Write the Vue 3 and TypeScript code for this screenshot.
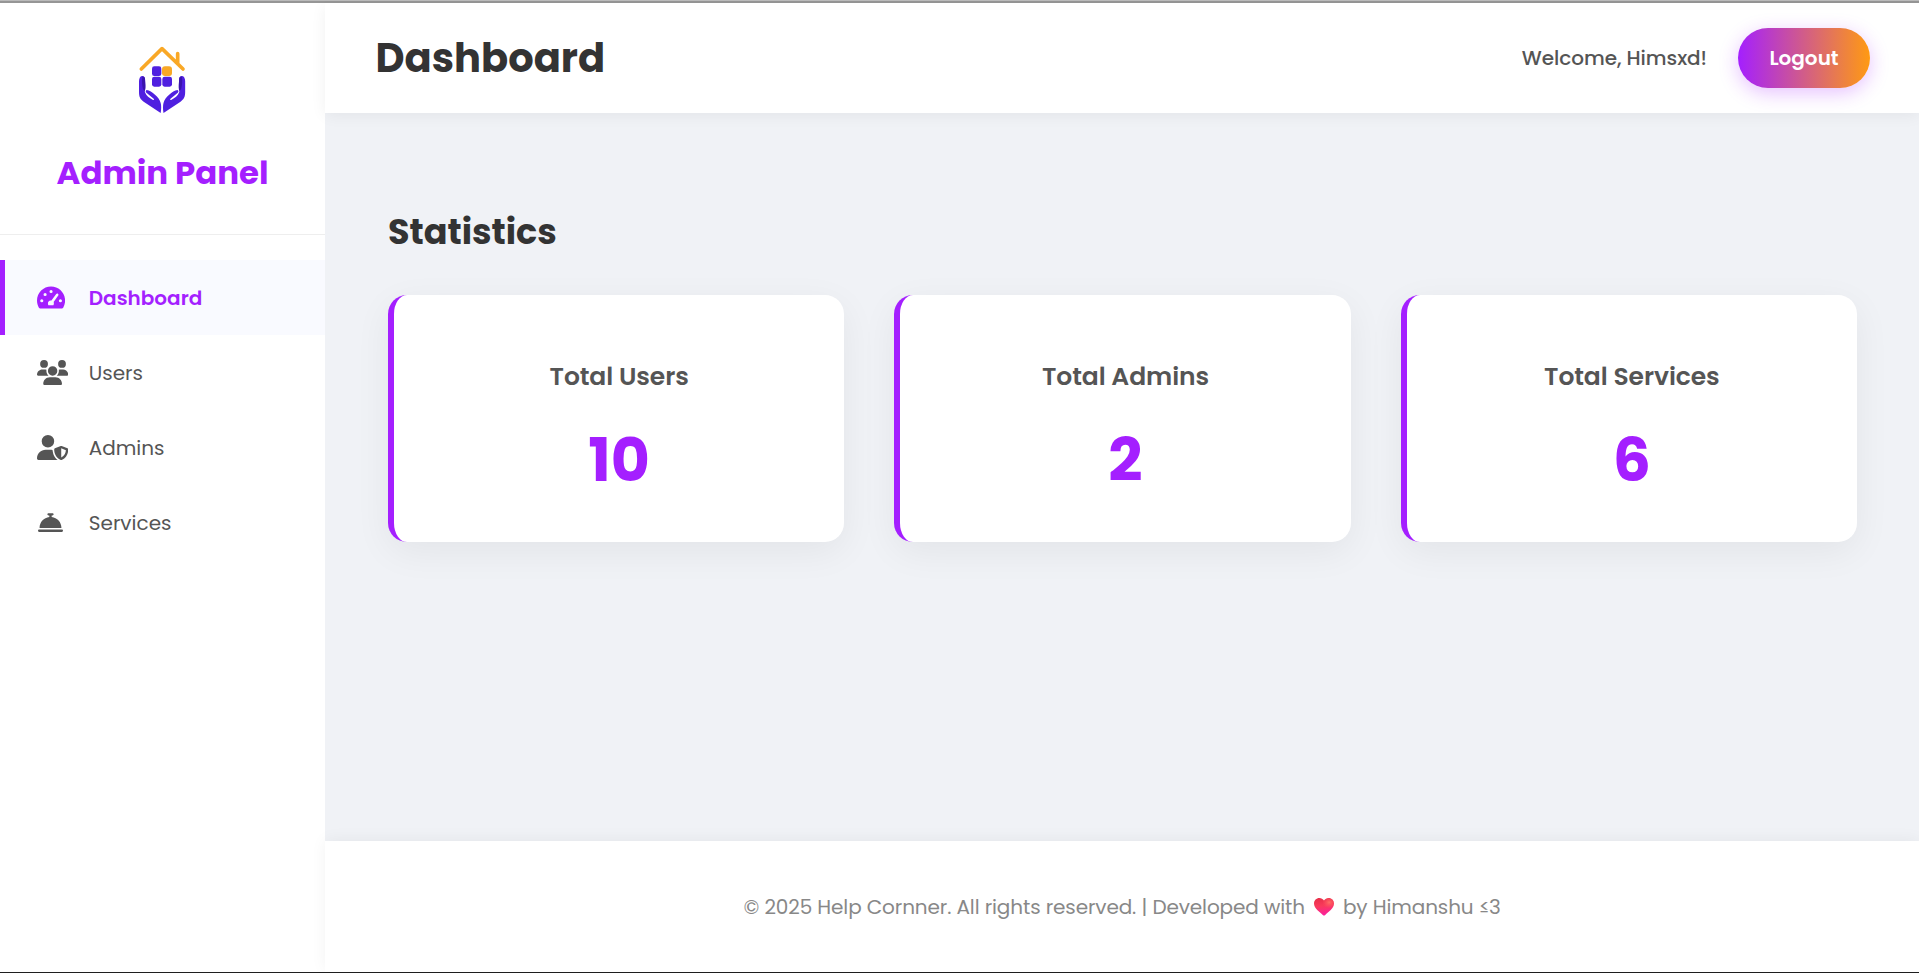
<script setup lang="ts">
interface NavItem {
  label: string
  viewBox: string
  width: number
  path: string
  active?: boolean
}

interface Stat {
  title: string
  value: number
}

const navItems: NavItem[] = [
  {
    label: 'Dashboard',
    viewBox: '0 0 576 512',
    width: 28.1,
    active: true,
    path: 'M288 32C128.94 32 0 160.94 0 320c0 52.8 14.25 102.26 39.06 144.8 5.61 9.62 16.3 15.2 27.44 15.2h443c11.14 0 21.83-5.58 27.44-15.2C561.75 422.26 576 372.8 576 320c0-159.06-128.94-288-288-288zM256 132a32 32 0 1 1 64 0a32 32 0 1 1-64 0zM134 194a32 32 0 1 1 64 0a32 32 0 1 1-64 0zM66 322a32 32 0 1 1 64 0a32 32 0 1 1-64 0zM448 322a32 32 0 1 1 64 0a32 32 0 1 1-64 0zM394 186C404 173 420 172 430 180C441 188 443 203 435 215L341 350C348 366 349 390 336 416H234C213 376 226 326 278 320C284 319 290 319 296 320Z'
  },
  {
    label: 'Users',
    viewBox: '0 0 640 512',
    width: 31.25,
    path: 'M144 0a80 80 0 1 1 0 160A80 80 0 1 1 144 0zM512 0a80 80 0 1 1 0 160A80 80 0 1 1 512 0zM0 298.7C0 239.8 47.8 192 106.7 192h42.7c15.9 0 31 3.5 44.6 9.7c-1.3 7.2-1.9 14.7-1.9 22.3c0 38.2 16.8 72.5 43.3 96c-.2 0-.4 0-.7 0H21.3C9.6 320 0 310.4 0 298.7zM405.3 320c-.2 0-.4 0-.7 0c26.6-23.5 43.3-57.8 43.3-96c0-7.6-.7-15-1.9-22.3c13.6-6.3 28.7-9.7 44.6-9.7h42.7C592.2 192 640 239.8 640 298.7c0 11.8-9.6 21.3-21.3 21.3H405.3zM224 224a96 96 0 1 1 192 0 96 96 0 1 1 -192 0zM128 485.3C128 411.7 187.7 352 261.3 352H378.7C452.3 352 512 411.7 512 485.3c0 14.7-11.9 26.7-26.7 26.7H154.7c-14.7 0-26.7-11.9-26.7-26.7z'
  },
  {
    label: 'Admins',
    viewBox: '0 0 640 512',
    width: 31.25,
    path: 'M224 256A128 128 0 1 0 224 0a128 128 0 1 0 0 256zm-45.7 48C79.8 304 0 383.8 0 482.3C0 498.7 13.3 512 29.7 512H418.3c1.8 0 3.5-.2 5.3-.5c-76.3-55.1-99.8-141-103.1-200.2c-16.1-4.8-33.1-7.3-50.7-7.3H178.3zm308.8-78.3l-120 48C358 277.4 352 286.2 352 296c0 63.3 25.9 168.8 134.8 214.2c5.9 2.5 12.6 2.5 18.5 0C614.1 464.8 640 359.3 640 296c0-9.8-6-18.6-15.1-22.3l-120-48c-5.7-2.3-12.1-2.3-17.8 0zM591.4 312c-3.9 50.7-27.2 116.7-95.4 149.7V273.8L591.4 312z'
  },
  {
    label: 'Services',
    viewBox: '0 0 512 512',
    width: 25,
    path: 'M216 64c-13.3 0-24 10.7-24 24s10.7 24 24 24h16v33.3C119.6 157.2 32 252.4 32 368H480c0-115.6-87.6-210.8-200-222.7V112h16c13.3 0 24-10.7 24-24s-10.7-24-24-24H256 216zM24 400c-13.3 0-24 10.7-24 24s10.7 24 24 24H488c13.3 0 24-10.7 24-24s-10.7-24-24-24H24z'
  }
]

const stats: Stat[] = [
  { title: 'Total Users', value: 10 },
  { title: 'Total Admins', value: 2 },
  { title: 'Total Services', value: 6 }
]
</script>

<template>
  <div class="page">
    <aside class="sidebar">
      <div class="brand">
        <svg class="logo" viewBox="0 0 270 285" aria-hidden="true">
          <path d="M64 117 L126 56 L189 117 M173 101 V71" fill="none" stroke="#f9a826" stroke-width="11" stroke-linecap="round" stroke-linejoin="round" />
          <g fill="#4f1fe0">
            <rect x="96" y="109" width="28" height="29" rx="7" />
            <rect x="96" y="140" width="28" height="30" rx="7" />
            <rect x="127" y="140" width="29" height="30" rx="7" />
            <g id="hand">
              <path d="M66 138 C60 139 57 146 57 154 L57 186 C57 201 61 208 71 215 L122 249 C124 239 124 225 122 219 C120 209 113 201 105 194 C97 187 88 180 80 180 C75 182 77 187 81 190 L101 206 C103 209 101 211 98 209 C88 204 79 198 75 187 L74 181 C76 177 76 171 76 165 L75 146 C74 140 70 137 66 138 Z" />
              <path d="M67 141 C65 152 66 166 69 177 L74 184 C77 177 76 171 76 165 L75 146 C74 141 70 138 67 141 Z" fill="#3a14ad" />
            </g>
            <use href="#hand" transform="translate(252.5 0) scale(-1 1)" />
          </g>
          <rect x="126" y="109" width="30" height="29" rx="9" fill="#f9a826" />
        </svg>
        <h2 class="brand-name">Admin Panel</h2>
      </div>
      <nav class="nav">
        <a v-for="item in navItems" :key="item.label" class="nav-item" :class="{ active: item.active }">
          <span class="nav-icon">
            <svg :viewBox="item.viewBox" :width="item.width" height="25" aria-hidden="true"><path :d="item.path" fill-rule="evenodd" /></svg>
          </span>
          <span>{{ item.label }}</span>
        </a>
      </nav>
    </aside>

    <div class="main">
      <header class="topbar">
        <h1 class="title">Dashboard</h1>
        <div class="account">
          <span class="welcome">Welcome, Himsxd!</span>
          <button class="logout" type="button">Logout</button>
        </div>
      </header>

      <main class="content">
        <h2 class="section-title">Statistics</h2>
        <div class="cards">
          <section v-for="stat in stats" :key="stat.title" class="card">
            <h3 class="card-title">{{ stat.title }}</h3>
            <p class="card-value">{{ stat.value }}</p>
          </section>
        </div>
      </main>

      <footer class="footer">
        <span>© 2025 Help Cornner. All rights reserved. | Developed with</span>
        <svg class="heart" viewBox="0 0 20 18" aria-hidden="true">
          <defs>
            <linearGradient id="heart-fill" x1="0.35" y1="0" x2="0.5" y2="1">
              <stop offset="0" stop-color="#e8304a" />
              <stop offset="0.45" stop-color="#fa3a5c" />
              <stop offset="1" stop-color="#fb1fa0" />
            </linearGradient>
            <radialGradient id="heart-shine" cx="0.76" cy="0.25" r="0.34">
              <stop offset="0" stop-color="#ff6f66" />
              <stop offset="1" stop-color="#ff5060" stop-opacity="0" />
            </radialGradient>
          </defs>
          <path d="M10 2.6 C8.8 .9 7.3 0 5.4 0 C2.3 0 0 2.4 0 5.6 C0 10.4 5.7 14.1 8.8 16.9 C9.6 17.6 10.4 17.6 11.2 16.9 C14.3 14.1 20 10.4 20 5.6 C20 2.4 17.7 0 14.6 0 C12.7 0 11.2 .9 10 2.6 Z" fill="url(#heart-fill)" />
          <path d="M10 2.6 C8.8 .9 7.3 0 5.4 0 C2.3 0 0 2.4 0 5.6 C0 10.4 5.7 14.1 8.8 16.9 C9.6 17.6 10.4 17.6 11.2 16.9 C14.3 14.1 20 10.4 20 5.6 C20 2.4 17.7 0 14.6 0 C12.7 0 11.2 .9 10 2.6 Z" fill="url(#heart-shine)" />
        </svg>
        <span>by Himanshu ≤3</span>
      </footer>
    </div>
  </div>
</template>

<style>
body {
  margin: 0;
  overflow: hidden;
}
</style>

<style scoped>
.page {
  position: relative;
  display: flex;
  box-sizing: border-box;
  height: 100vh;
  border-top: 3px solid #969696;
  border-bottom: 1px solid #1f1f1f;
  background: #f0f2f6;
  font-family: Poppins, 'Open Sans', sans-serif;
  color: #333;
}

.page::before {
  content: '';
  position: absolute;
  top: -3px;
  left: 0;
  right: 0;
  height: 1px;
  background: #bababa;
}

.sidebar {
  flex: none;
  width: 325px;
  background: #fff;
}

.brand {
  display: flex;
  flex-direction: column;
  align-items: center;
  box-sizing: border-box;
  height: 232px;
  padding-top: 27px;
  border-bottom: 1px solid #eee;
}

.logo {
  width: 90px;
  height: 95px;
  margin-left: 5px;
}

.brand-name {
  margin: 24px 0 0;
  font-size: 32.4px;
  line-height: 48px;
  font-weight: 700;
  color: #a41fff;
}

.nav {
  padding-top: 25px;
}

.nav-item {
  display: flex;
  align-items: center;
  gap: 24.25px;
  box-sizing: border-box;
  height: 75px;
  padding-left: 31.5px;
  border-left: 5px solid transparent;
  font-size: 20px;
  color: #555;
}

.nav-item.active {
  border-left-color: #a41fff;
  background: #f9faff;
  color: #a41fff;
  font-weight: 600;
}

.nav-icon {
  display: flex;
  width: 28px;
  height: 25px;
}

.nav-icon svg {
  flex: none;
  margin: 0 auto;
  fill: currentColor;
}

.main {
  flex: 1;
  display: flex;
  flex-direction: column;
  min-width: 0;
  background: #f0f2f6;
}

.topbar {
  display: flex;
  align-items: center;
  justify-content: space-between;
  height: 110px;
  box-sizing: border-box;
  padding: 0 49px 0 50.5px;
  background: #fff;
  box-shadow: 0 2.5px 15px rgba(0, 0, 0, 0.06);
}

.title {
  margin: 0;
  font-size: 40px;
  line-height: 60px;
  font-weight: 700;
}

.account {
  display: flex;
  align-items: center;
  gap: 31px;
}

.welcome {
  font-size: 20px;
  font-weight: 500;
  letter-spacing: -0.05px;
  color: #555;
}

.logout {
  width: 132px;
  height: 60px;
  padding: 0;
  border: 0;
  border-radius: 31px;
  background: linear-gradient(90deg, #a41fff, #ff9a12);
  box-shadow: 0 5px 19px rgba(164, 31, 255, 0.28);
  font-family: inherit;
  font-size: 20px;
  font-weight: 600;
  color: #fff;
}

.content {
  flex: 1;
  padding: 92px 62px 0 63px;
}

.section-title {
  margin: 0 0 37px;
  font-size: 35px;
  line-height: 53px;
  font-weight: 700;
}

.cards {
  display: grid;
  grid-template-columns: repeat(3, 1fr);
  gap: 50px;
}

.card {
  box-sizing: border-box;
  height: 247px;
  padding-top: 62.5px;
  border-left: 6px solid #a41fff;
  border-radius: 19px;
  background: #fff;
  box-shadow: 0 10px 37px rgba(0, 0, 0, 0.06);
  text-align: center;
}

.card-title {
  margin: 0 0 20px;
  font-size: 25px;
  line-height: 37.5px;
  font-weight: 600;
  letter-spacing: -0.08px;
  color: #555;
}

.card-value {
  margin: 0;
  font-size: 60px;
  line-height: 90px;
  font-weight: 700;
  color: #a41fff;
}

.footer {
  display: flex;
  align-items: center;
  justify-content: center;
  height: 131px;
  background: #fff;
  box-shadow: 0 -2.5px 15px rgba(0, 0, 0, 0.05);
  font-size: 20px;
  letter-spacing: -0.11px;
  color: #888;
}

.heart {
  width: 20px;
  height: 18px;
  margin: 1px 9px 0 9px;
}
</style>
